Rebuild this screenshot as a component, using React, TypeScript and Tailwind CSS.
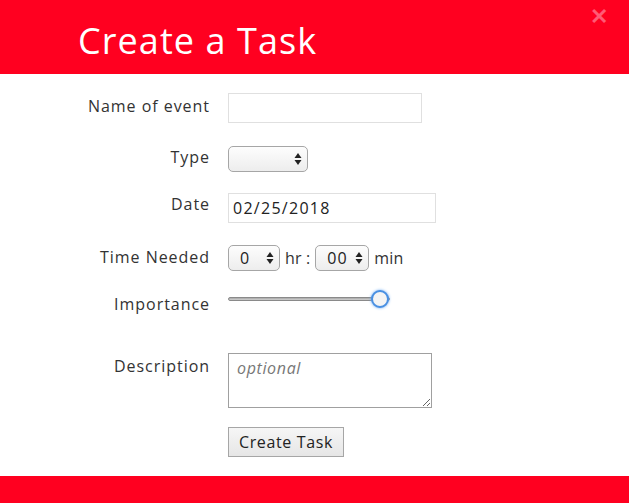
import React from "react";

const font = { fontFamily: "'Open Sans', Lato, sans-serif" };

function Arrows() {
  return (
    <svg width="8" height="14" viewBox="0 0 8 14" className="pointer-events-none absolute right-[6px] top-1/2 -translate-y-1/2">
      <path d="M4 1 L7.5 6 H0.5 Z" fill="#222" />
      <path d="M4 13 L7.5 8 H0.5 Z" fill="#222" />
    </svg>
  );
}

function FakeSelect({ value, width }: { value: string; width: string }) {
  return (
    <div className={`relative h-[26px] ${width}`}>
      <select
        defaultValue={value}
        className="h-full w-full appearance-none rounded-[5px] border border-[#a6a6a6] bg-gradient-to-b from-[#fdfdfd] to-[#ededed] pl-[11px] text-[16px] tracking-[0.06em] text-[#222] outline-none"
        style={font}
      >
        <option value={value}>{value}</option>
      </select>
      <Arrows />
    </div>
  );
}

export default function App() {
  return (
    <div className="flex h-[503px] w-[629px] flex-col bg-white text-[#333] tracking-[0.06em]" style={font}>
      <header className="relative h-[74px] shrink-0 bg-[#ff0020] pl-[78px] pt-[18px]">
        <h1 className="text-[36px] leading-[46px] font-normal tracking-[0.03em] text-white">Create a Task</h1>
        <span className="absolute right-[20px] top-[4px] text-[22px] font-bold leading-none text-[#ff5a75]">✕</span>
      </header>

      <form className="flex-1 grid grid-cols-[210px_1fr] gap-x-[18px] content-start" onSubmit={(e) => e.preventDefault()}>
        <label className="mt-[19px] pt-[2px] text-right text-[16px] leading-[22px]">Name of event</label>
        <div className="mt-[19px]">
          <input className="h-[30px] w-[194px] border border-[#e0e0e0] outline-none" />
        </div>

        <label className="mt-[23px] pt-0 text-right text-[16px] leading-[22px]">Type</label>
        <div className="mt-[23px]">
          <FakeSelect value="" width="w-[80px]" />
        </div>

        <label className="mt-[21px] text-right text-[16px] leading-[22px]">Date</label>
        <div className="mt-[21px]">
          <input
            defaultValue="02/25/2018"
            className="h-[30px] w-[208px] border border-[#e0e0e0] px-[4px] text-[16px] tracking-[0.08em] text-[#222] outline-none"
            style={font}
          />
        </div>

        <label className="mt-[22px] pt-[1px] text-right text-[16px] leading-[22px]">Time Needed</label>
        <div className="mt-[22px] flex items-center gap-[5px] text-[16px] tracking-[0.01em]">
          <FakeSelect value="0" width="w-[52px]" />
          <span>hr :</span>
          <FakeSelect value="00" width="w-[54px]" />
          <span>min</span>
        </div>

        <label className="mt-[18px] pt-[4px] text-right text-[16px] leading-[22px]">Importance</label>
        <div className="mt-[18px] flex h-[20px] items-center">
          <input
            type="range"
            defaultValue={100}
            className="h-[4px] w-[162px] appearance-none rounded-full border border-[#8a8a8a] bg-gradient-to-b from-[#a8a8a8] to-[#d0d0d0] outline-none [&::-webkit-slider-thumb]:h-[18px] [&::-webkit-slider-thumb]:w-[18px] [&::-webkit-slider-thumb]:appearance-none [&::-webkit-slider-thumb]:rounded-full [&::-webkit-slider-thumb]:border-[2px] [&::-webkit-slider-thumb]:border-[#4a90e2] [&::-webkit-slider-thumb]:bg-[#f4f4f4] [&::-webkit-slider-thumb]:shadow-[0_0_3px_#6aa8f0]"
          />
        </div>

        <label className="mt-[38px] pt-[2px] text-right text-[16px] leading-[22px]">Description</label>
        <div className="mt-[38px]">
          <textarea
            placeholder="optional"
            className="block h-[55px] w-[204px] border border-[#a0a0a0] px-[8px] py-[2px] text-[16px] tracking-[0.04em] outline-none placeholder:italic placeholder:text-[#777]"
            style={font}
          />
        </div>

        <div />
        <div className="mt-[19px]">
          <button
            type="submit"
            className="h-[30px] w-[116px] border border-[#a6a6a6] bg-gradient-to-b from-[#f6f6f6] to-[#e6e6e6] text-[16px] tracking-[0.04em] text-[#222]"
            style={font}
          >
            Create Task
          </button>
        </div>
      </form>

      <footer className="h-[27px] shrink-0 bg-[#ff0020]" />
    </div>
  );
}
